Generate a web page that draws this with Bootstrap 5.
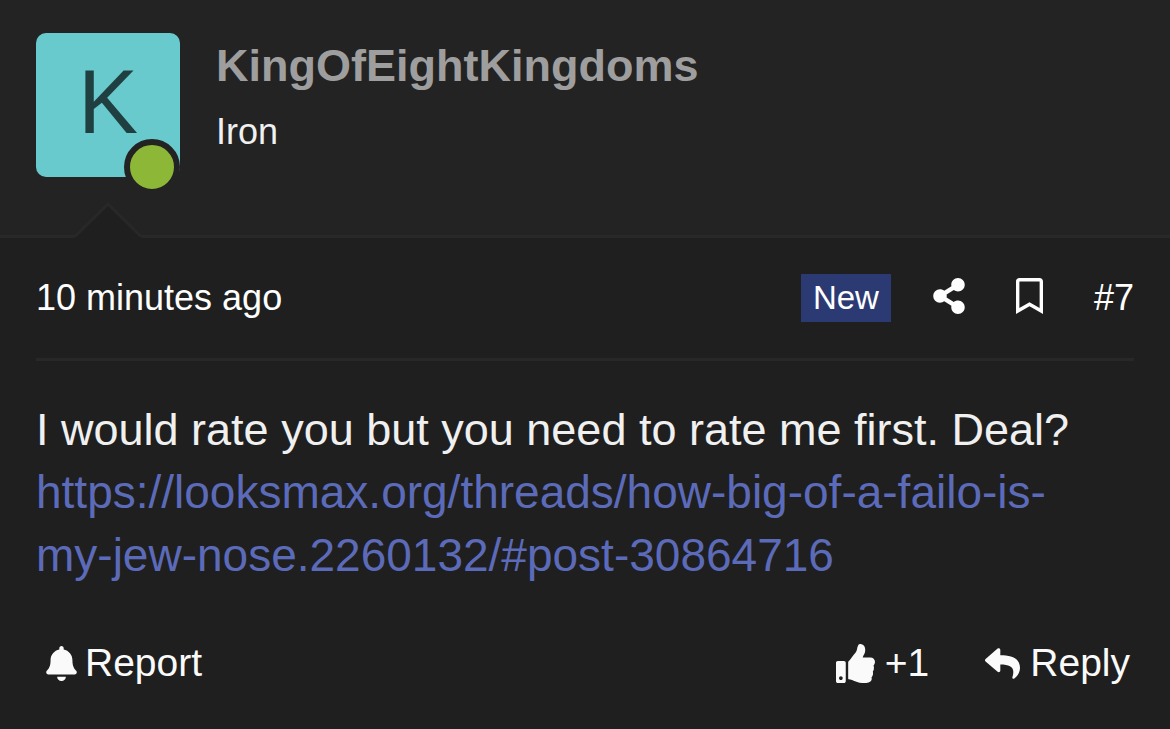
<!DOCTYPE html>
<html lang="en">
<head>
<meta charset="utf-8">
<meta name="viewport" content="width=device-width, initial-scale=1">
<title>Thread post #7</title>
<link href="https://cdn.jsdelivr.net/npm/bootstrap@5.3.0/dist/css/bootstrap.min.css" rel="stylesheet">
<style>
  body { background: #1f1f1f; color: #f0f0f0; font-family: "Liberation Sans", Arial, sans-serif; font-size: 36px; line-height: 48px; }
  a, button { color: inherit; }
  svg { fill: currentColor; display: block; flex: none; }
  .post-user { background: #232323; border-bottom: 3px solid #282828; padding: 33px 36px 58px; gap: 36px; }
  .avatar { width: 144px; height: 144px; border-radius: 10px; background: #68cacc; color: #1f3f40; font-size: 90px; line-height: 138px; }
  .online-dot { right: 0; bottom: -18px; width: 56px; height: 56px; border: 6px solid #232323; background: #8db737; }
  .post-arrow { left: 74px; bottom: -3px; }
  .user-name { font-size: 45px; line-height: 60px; color: #9e9e9e; margin: 3px 0 12px; }
  .post-main { padding: 0 36px; }
  .post-meta { color: #fefefe; padding: 36px 0; border-bottom: 3px solid #282828; }
  .new-label { background: #2c3a73; padding: 0 12px; font-size: 33px; margin-right: 42px; }
  .meta-icon { margin: 0 51px 4px 0; }
  .post-text { font-size: 45px; line-height: 63px; padding: 37px 48px 52px 0; }
  .post-text a { color: #5c6bb9; font-size: 46px; }
  .post-actions { font-size: 39px; color: #fafafa; padding: 0 4px 36px 10px; gap: 56px; }
  .action-link { gap: 10px; }
</style>
</head>
<body>
<article>
  <header class="post-user position-relative d-flex">
    <a href="#" class="avatar position-relative d-block text-center text-decoration-none flex-shrink-0">K<span class="online-dot position-absolute rounded-circle"></span></a>
    <div>
      <h1 class="user-name fw-bold"><a href="#" class="text-decoration-none">KingOfEightKingdoms</a></h1>
      <div>Iron</div>
    </div>
    <svg class="post-arrow position-absolute" width="68" height="36" viewBox="0 0 68 36" aria-hidden="true"><path d="M0 36 34 2 68 36z" fill="#1f1f1f"/><path d="M1 34.500 34 2 67 34.500" fill="none" stroke="#282828" stroke-width="3"/></svg>
  </header>
  <div class="post-main">
    <div class="post-meta d-flex align-items-center justify-content-between">
      <a href="#" class="text-decoration-none"><time>10 minutes ago</time></a>
      <div class="d-flex align-items-center">
        <span class="new-label">New</span>
        <a href="#" aria-label="Share" class="meta-icon"><svg width="32" height="36" viewBox="0 0 448 512"><path d="M352 320c-22.608 0-43.387 7.819-59.790 20.895l-102.486-64.054a96.551 96.551 0 0 0 0-41.683l102.486-64.054C308.613 184.181 329.392 192 352 192c53.019 0 96-42.981 96-96S405.019 0 352 0s-96 42.981-96 96c0 7.158.790 14.130 2.276 20.841L155.790 180.895C139.387 167.819 118.608 160 96 160c-53.019 0-96 42.981-96 96s42.981 96 96 96c22.608 0 43.387-7.819 59.790-20.895l102.486 64.054A96.301 96.301 0 0 0 256 416c0 53.019 42.981 96 96 96s96-42.981 96-96-42.981-96-96-96z"/></svg></a>
        <a href="#" aria-label="Bookmark" class="meta-icon"><svg width="27" height="36" viewBox="0 0 384 512"><path d="M336 0H48C21.490 0 0 21.490 0 48v464l192-112 192 112V48c0-26.510-21.490-48-48-48zm0 428.430l-144-84-144 84V54a6 6 0 0 1 6-6h276c3.314 0 6 2.683 6 5.996V428.430z"/></svg></a>
        <a href="#" class="text-decoration-none">#7</a>
      </div>
    </div>
    <div class="post-text">I would rate you but you need to rate me first. Deal?<br><a href="#" class="text-decoration-none text-break">https://looksmax.org/threads/how-big-of-a-failo-is-my-jew-nose.2260132/#post-30864716</a></div>
    <div class="post-actions d-flex align-items-center">
      <a href="#" class="d-flex align-items-center gap-2 text-decoration-none me-auto"><svg width="31" height="35" viewBox="0 0 448 512" aria-hidden="true"><path d="M224 512c35.320 0 63.970-28.650 63.970-64H160.030c0 35.350 28.650 64 63.970 64zm215.390-149.710c-19.320-20.760-55.470-51.990-55.470-154.290 0-77.700-54.480-139.900-127.940-155.160V32c0-17.670-14.320-32-31.980-32s-31.980 14.330-31.980 32v20.840C118.560 68.100 64.080 130.300 64.080 208c0 102.300-36.150 133.530-55.470 154.290-6 6.450-8.660 14.160-8.610 21.710.110 16.400 12.980 32 32.100 32h383.800c19.120 0 32-15.600 32.100-32 .050-7.550-2.610-15.270-8.610-21.710z"/></svg>Report</a>
      <a href="#" class="action-link d-flex align-items-center text-decoration-none"><svg width="39" height="39" viewBox="0 0 512 512" aria-hidden="true"><path d="M104 224H24c-13.255 0-24 10.745-24 24v240c0 13.255 10.745 24 24 24h80c13.255 0 24-10.745 24-24V248c0-13.255-10.745-24-24-24zM64 472c-13.255 0-24-10.745-24-24s10.745-24 24-24 24 10.745 24 24-10.745 24-24 24zM384 81.452c0 42.416-25.970 66.208-33.277 94.548h101.723c33.397 0 59.397 27.746 59.553 58.098.084 17.938-7.546 37.249-19.439 49.197l-.110.110c9.836 23.337 8.237 56.037-9.308 79.469 8.681 25.895-.069 57.704-16.382 74.757 4.298 17.598 2.244 32.575-6.148 44.632C440.202 511.587 389.616 512 346.839 512l-2.845-.001c-48.287-.017-87.806-17.598-119.560-31.725-15.957-7.099-36.821-15.887-52.651-16.178-6.540-.120-11.783-5.457-11.783-11.998v-213.770c0-3.200 1.282-6.271 3.558-8.521 39.614-39.144 56.648-80.587 89.117-113.111 14.804-14.832 20.188-37.236 25.393-58.902C282.515 39.293 291.817 0 312 0c24 0 72 8 72 81.452z"/></svg>+1</a>
      <a href="#" class="action-link d-flex align-items-center text-decoration-none"><svg width="35" height="35" viewBox="0 0 512 512" aria-hidden="true"><path d="M8.309 189.836L184.313 37.851C199.719 24.546 224 35.347 224 56.015v80.053c160.629 1.839 288 34.032 288 186.258 0 61.441-39.581 122.309-83.333 154.132-13.653 9.931-33.111-2.533-28.077-18.631 45.344-145.012-21.507-183.510-176.590-185.742V360c0 20.700-24.300 31.453-39.687 18.164l-176.004-152c-11.071-9.562-11.086-26.753 0-36.328z"/></svg>Reply</a>
    </div>
  </div>
</article>
<script src="https://cdn.jsdelivr.net/npm/bootstrap@5.3.0/dist/js/bootstrap.bundle.min.js"></script>
</body>
</html>
